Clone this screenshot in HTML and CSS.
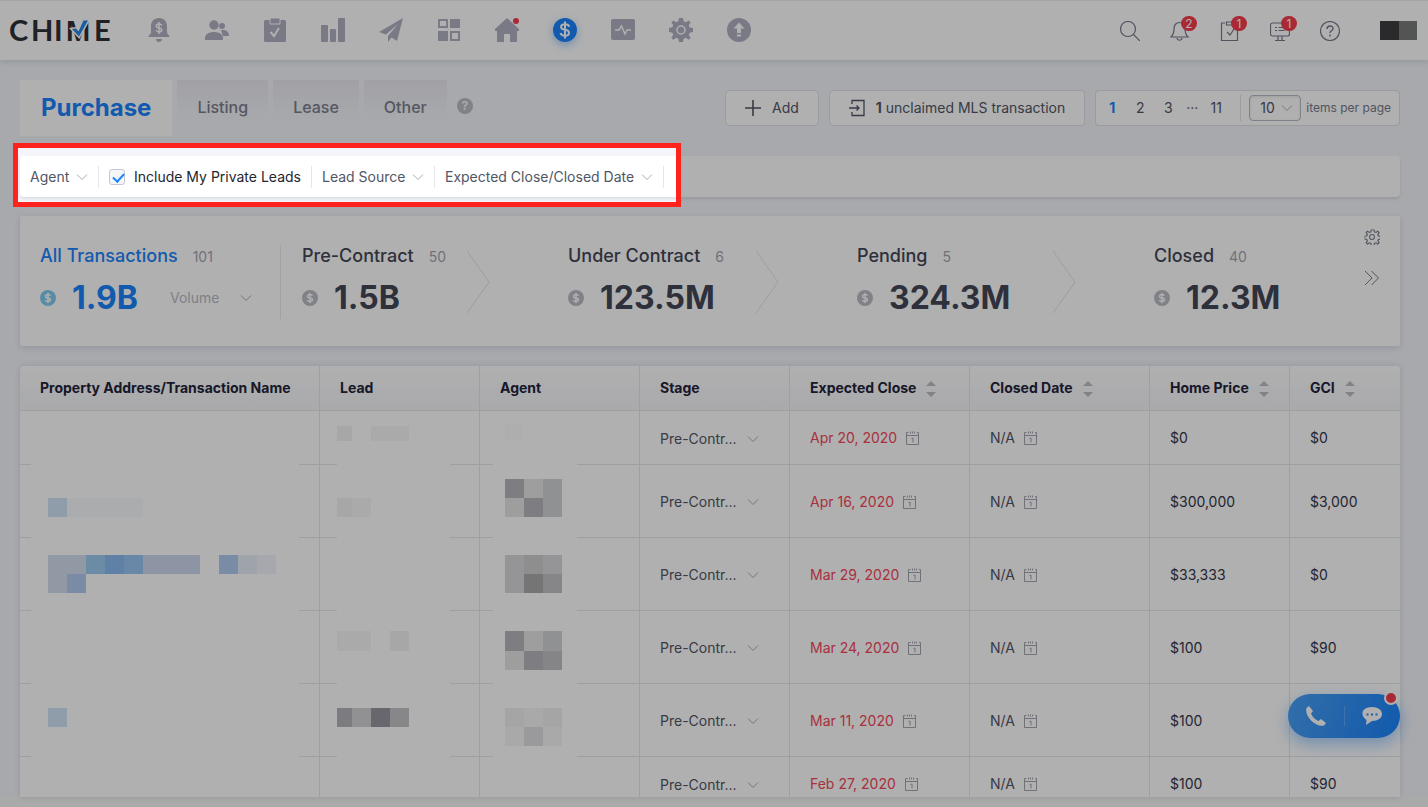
FILE: index.html
```html
<!DOCTYPE html>
<html lang="en">
<head>
<meta charset="utf-8">
<title>Chime – Transactions</title>
<meta name="viewport" content="width=device-width, initial-scale=1">
<link rel="stylesheet" href="styles.css">
</head>
<body>
<svg class="defs" aria-hidden="true">
  <symbol id="chev" viewBox="0 0 12 8"><path d="M1 1.5l5 5 5-5" fill="none" stroke="currentColor"/></symbol>
  <symbol id="cal" viewBox="0 0 14 16"><path d="M.5 2.500v12h12v-12M.5 5.500h12M.5 2.500h2M11 2.500h1.500M4.500 1.500v2M6.500 1.500v2M8.500 1.500v2M5.500 8.500l1.500-.5v4.500" fill="none" stroke="currentColor"/></symbol>
  <symbol id="coin" viewBox="0 0 16 16"><circle cx="8" cy="8" r="8" fill="currentColor"/><path d="M10.500 5.800C10 4.800 9 4.500 8 4.500c-3.300 0-3.300 3.200 0 3.500 3.300.3 3.300 3.500 0 3.500-1.200 0-2.200-.5-2.600-1.500M8 2.800v10.400" fill="none" stroke="#fff" stroke-width="1.300"/></symbol>
  <symbol id="sort" viewBox="0 0 10 16"><path d="M5 0l5 5H0zM5 16l5-5H0z" fill="currentColor"/></symbol>
  <symbol id="gear" viewBox="0 0 24 24"><path d="M10 0h4l.7 3.300 2.200.9L19.700 2.400l2 2-1.900 2.800.9 2.200L24 10v4l-3.300.7-.9 2.200 1.900 2.800-2 2-2.800-1.900-2.200.9L14 24h-4l-.7-3.300-2.200-.9-2.800 1.900-2-2 1.900-2.800-.9-2.200L0 14v-4l3.300-.7.9-2.200L2.300 4.400l2-2 2.800 1.800 2.200-.9z"/></symbol>
</svg>

<header class="top">
  <a class="logo" href="#" aria-label="Chime">
    <svg width="102" height="40" viewBox="0 -8 102 40">
      <g class="logo-text"><text x="-1" y="22">C</text><text x="21" y="22">H</text><text x="44" y="22">I</text><text class="logo-m" x="56" y="22">M</text><text x="84" y="22">E</text></g>
      <path d="M62 10l4-.500 2.500 3L73.500 1.500H78L69 17.500z" fill="#2389e8" stroke="#fff" stroke-width="3" paint-order="stroke"/>
    </svg>
  </a>
  <nav class="nav">
    <a href="#" aria-label="Alerts"><svg viewBox="0 0 24 24"><path d="M12 0c5 0 8 3.600 8 8v7l3 4H1l3-4V8c0-4.400 3-8 8-8zM9 21h6c0 4-6 4-6 0z" fill="currentColor"/><path d="M14.800 7.300C14 6 13 5.900 12 5.900c-3.600 0-3.600 3.600 0 4 3.600.4 3.600 4.100 0 4.100-1.400 0-2.500-.6-3-1.700M12 4v12" fill="none" stroke="#fff" stroke-width="1.500"/></svg></a>
    <a href="#" aria-label="People"><svg viewBox="0 0 24 24"><circle cx="17" cy="8" r="3" fill="currentColor"/><path d="M16 12.500c4-1.500 8 1 8 5.500h-6z" fill="currentColor"/><circle cx="9" cy="7" r="4.700" fill="currentColor"/><path d="M0 22v-2c0-8 18-8 18 0v2z" fill="currentColor"/></svg></a>
    <a href="#" aria-label="Tasks"><svg viewBox="0 0 24 24"><rect x="1" y="2" width="22" height="22" rx="1.500" fill="currentColor"/><path d="M7 0h10v6H7z" fill="currentColor" stroke="#fff"/><path d="M7.500 14l3.500 4 5-8" fill="none" stroke="#fff" stroke-width="2"/></svg></a>
    <a href="#" aria-label="Reports"><svg viewBox="0 0 24 24" fill="currentColor"><rect y="7" width="7" height="17" rx="1"/><rect x="9" y="11" width="6" height="13" rx="1"/><rect x="17" width="7" height="24" rx="1"/></svg></a>
    <a href="#" aria-label="Campaigns"><svg viewBox="0 0 24 24" fill="currentColor"><path d="M24 0L0 14l7 2.500L19 6 9 18v6l3.500-4.500L18 23zM7 18v6z"/></svg></a>
    <a href="#" aria-label="Apps"><svg viewBox="0 0 24 24" fill="currentColor"><path d="M1 1h10v9H1zm2 2v5h6V3zM13 1h10v9H13zM1 13h10v10H1zM13 13h10v10H13zm2 2v6h6v-6z" fill-rule="evenodd"/></svg></a>
    <a href="#" aria-label="Listings"><svg viewBox="0 0 24 24"><path d="M12 0L0 11v2h2v11h7v-8h6v8h7V13h2v-2z" fill="currentColor"/><circle cx="21" cy="3" r="3" fill="#f53d50"/></svg></a>
    <a href="#" class="on" aria-label="Transactions" aria-current="page"><svg viewBox="0 0 24 24"><circle cx="12" cy="12" r="12" fill="currentColor"/><path d="M16.300 8.800C15.700 7 14 6.300 12 6.300c-5.300 0-5.300 5 0 5.500 5.300.5 5.300 5.900 0 5.900-2.200 0-4-.9-4.500-2.700M12 3.500v17" fill="none" stroke="#fff" stroke-width="2"/></svg></a>
    <a href="#" aria-label="Activity"><svg viewBox="0 0 24 24"><rect y="1" width="24" height="21" rx="2" fill="currentColor"/><path d="M4 12h4l2.500-4 3.500 8 2-4h4" fill="none" stroke="#fff" stroke-width="1.500"/></svg></a>
    <a href="#" aria-label="Settings"><svg viewBox="0 0 24 24"><use href="#gear" fill="currentColor"/><circle cx="12" cy="12" r="4" fill="none" stroke="#fff" stroke-width="1.500"/></svg></a>
    <a href="#" aria-label="Upgrade"><svg viewBox="0 0 24 24"><circle cx="12" cy="12" r="12" fill="currentColor"/><path d="M12 4.500l5.500 6H14v4.500h-4v-4.500H6.500zM10 16.500h4v2h-4z" fill="#fff"/></svg></a>
  </nav>
  <div class="tools">
    <button aria-label="Search"><svg viewBox="0 0 20 20"><circle cx="8" cy="8" r="7.500"/><path d="M13.500 13.500l6.500 6.500"/></svg></button>
    <button aria-label="Notifications"><svg viewBox="0 0 20 20"><path d="M1 16c3-3 3-5 3-8 0-4 2-6.500 5.500-6.500S15 4 15 8c0 3 0 5 3 8zM7 17c.5 3 4.500 3 5 0"/></svg><span class="badge">2</span></button>
    <button aria-label="Tasks due"><svg viewBox="0 0 20 20"><path d="M5 2H1.500v17.500h16V2H14M6.500 1h6v3h-6zM7 11l3 3 4-6"/></svg><span class="badge">1</span></button>
    <button aria-label="Messages"><svg viewBox="0 0 20 20"><rect x=".5" y="2" width="19" height="13" rx="2"/><path d="M8 15v4M12 15v4M5 19.500h10M5 6.500h2M8.500 6.500h6M5 9.500h2M8.500 9.500h6"/></svg><span class="badge">1</span></button>
    <button aria-label="Help"><svg viewBox="0 0 20 20"><circle cx="10" cy="10" r="9.500"/><path d="M7 8c0-4 6-4 6-.500 0 2-3 2-3 4.500M10 13.500v2" stroke-width="1.400"/></svg></button>
    <svg class="avatar" width="37" height="19" viewBox="0 0 37 19"><path d="M0 0h19v19H0z" fill="#3d3e40"/><path d="M19 0h18v19H19z" fill="#797b7a"/></svg>
  </div>
</header>

<main class="page">
  <div class="bar">
    <nav class="tabs">
      <a class="tab tab-on" href="#">Purchase</a>
      <a class="tab" href="#">Listing</a>
      <a class="tab" href="#">Lease</a>
      <a class="tab" href="#">Other</a>
      <button class="hint" aria-label="About transaction types">?</button>
    </nav>
    <div class="actions">
      <button class="btn"><svg width="16" height="16" viewBox="0 0 16 16"><path d="M8 0v16M0 8h16" stroke="currentColor" stroke-width="1.600"/></svg>Add</button>
      <button class="btn"><svg width="16" height="18" viewBox="0 0 16 18"><path d="M3 5V1.500h12v15H3V13M0 9h10M7.500 6.500L10 9l-2.500 2.500" fill="none" stroke="currentColor" stroke-width="1.300"/></svg><span><b>1</b> unclaimed MLS transaction</span></button>
      <div class="pager">
        <a class="pg pg-on" href="#">1</a><a class="pg" href="#">2</a><a class="pg" href="#">3</a><span class="dots">···</span><a class="pg" href="#">11</a>
        <label class="size"><span class="drop size-drop"><select><option>10</option></select><svg class="chev"><use href="#chev"/></svg></span>items per page</label>
      </div>
    </div>
  </div>

  <section class="filters">
    <div class="filter-set">
      <label class="drop filter"><select aria-label="Agent"><option>Agent</option></select><svg class="chev"><use href="#chev"/></svg></label>
      <label class="filter check"><input type="checkbox" checked><span>Include My Private Leads</span></label>
      <label class="drop filter"><select aria-label="Lead Source"><option>Lead Source</option></select><svg class="chev"><use href="#chev"/></svg></label>
      <label class="drop filter"><select aria-label="Expected Close/Closed Date"><option>Expected Close/Closed Date</option></select><svg class="chev"><use href="#chev"/></svg></label>
      <div class="spotlight"></div>
    </div>
  </section>

  <section class="stats">
    <div class="stat stat-all">
      <div class="stat-head"><h2>All Transactions</h2><span>101</span></div>
      <div class="stat-sum"><svg class="coin"><use href="#coin"/></svg><strong>1.9B</strong><label class="drop volume"><select aria-label="Measure"><option>Volume</option></select><svg class="chev"><use href="#chev"/></svg></label></div>
    </div>
    <div class="stat stat-first">
      <div class="stat-head"><h2>Pre-Contract</h2><span>50</span></div>
      <div class="stat-sum"><svg class="coin"><use href="#coin"/></svg><strong>1.5B</strong></div>
      <svg class="arrow" viewBox="0 0 24 64"><path d="M1 1l22 31L1 63"/></svg>
    </div>
    <div class="stat">
      <div class="stat-head"><h2>Under Contract</h2><span>6</span></div>
      <div class="stat-sum"><svg class="coin"><use href="#coin"/></svg><strong>123.5M</strong></div>
      <svg class="arrow" viewBox="0 0 24 64"><path d="M1 1l22 31L1 63"/></svg>
    </div>
    <div class="stat">
      <div class="stat-head"><h2>Pending</h2><span>5</span></div>
      <div class="stat-sum"><svg class="coin"><use href="#coin"/></svg><strong>324.3M</strong></div>
      <svg class="arrow" viewBox="0 0 24 64"><path d="M1 1l22 31L1 63"/></svg>
    </div>
    <div class="stat">
      <div class="stat-head"><h2>Closed</h2><span>40</span></div>
      <div class="stat-sum"><svg class="coin"><use href="#coin"/></svg><strong>12.3M</strong></div>
      <div class="stat-tools">
        <button aria-label="Pipeline settings"><svg width="16" height="16" viewBox="-1 -1 26 26" fill="none" stroke="currentColor" stroke-width="1.700"><use href="#gear"/><circle cx="12" cy="12" r="4"/></svg></button>
        <button aria-label="More stages"><svg width="16" height="16" viewBox="0 0 16 16" fill="none" stroke="currentColor"><path d="M1 1l7 7-7 7M7.500 1l7 7-7 7"/></svg></button>
      </div>
    </div>
  </section>

  <section class="grid">
    <table>
      <colgroup><col class="c-name"><col class="c-mid"><col class="c-mid"><col class="c-stage"><col class="c-date"><col class="c-date"><col class="c-price"><col></colgroup>
      <thead><tr><th>Property Address/Transaction Name</th><th>Lead</th><th>Agent</th><th>Stage</th><th>Expected Close<svg class="sort"><use href="#sort"/></svg></th><th>Closed Date<svg class="sort"><use href="#sort"/></svg></th><th>Home Price<svg class="sort"><use href="#sort"/></svg></th><th>GCI<svg class="sort"><use href="#sort"/></svg></th></tr></thead>
      <tbody>
        <tr class="short"><td></td><td></td><td></td><td><label class="drop"><select aria-label="Stage"><option>Pre-Contr...</option></select><svg class="chev"><use href="#chev"/></svg></label></td><td class="late">Apr 20, 2020<svg class="cal"><use href="#cal"/></svg></td><td class="na">N/A<svg class="cal"><use href="#cal"/></svg></td><td>$0</td><td>$0</td></tr>
        <tr><td></td><td></td><td></td><td><label class="drop"><select aria-label="Stage"><option>Pre-Contr...</option></select><svg class="chev"><use href="#chev"/></svg></label></td><td class="late">Apr 16, 2020<svg class="cal"><use href="#cal"/></svg></td><td class="na">N/A<svg class="cal"><use href="#cal"/></svg></td><td>$300,000</td><td>$3,000</td></tr>
        <tr><td></td><td></td><td></td><td><label class="drop"><select aria-label="Stage"><option>Pre-Contr...</option></select><svg class="chev"><use href="#chev"/></svg></label></td><td class="late">Mar 29, 2020<svg class="cal"><use href="#cal"/></svg></td><td class="na">N/A<svg class="cal"><use href="#cal"/></svg></td><td>$33,333</td><td>$0</td></tr>
        <tr><td></td><td></td><td></td><td><label class="drop"><select aria-label="Stage"><option>Pre-Contr...</option></select><svg class="chev"><use href="#chev"/></svg></label></td><td class="late">Mar 24, 2020<svg class="cal"><use href="#cal"/></svg></td><td class="na">N/A<svg class="cal"><use href="#cal"/></svg></td><td>$100</td><td>$90</td></tr>
        <tr><td></td><td></td><td></td><td><label class="drop"><select aria-label="Stage"><option>Pre-Contr...</option></select><svg class="chev"><use href="#chev"/></svg></label></td><td class="late">Mar 11, 2020<svg class="cal"><use href="#cal"/></svg></td><td class="na">N/A<svg class="cal"><use href="#cal"/></svg></td><td>$100</td><td></td></tr>
        <tr class="short"><td></td><td></td><td></td><td><label class="drop"><select aria-label="Stage"><option>Pre-Contr...</option></select><svg class="chev"><use href="#chev"/></svg></label></td><td class="late">Feb 27, 2020<svg class="cal"><use href="#cal"/></svg></td><td class="na">N/A<svg class="cal"><use href="#cal"/></svg></td><td>$100</td><td>$90</td></tr>
      </tbody>
    </table>
    <svg class="redact" width="620" height="440" viewBox="20 366 620 440" shape-rendering="crispEdges" aria-hidden="true">
      <g fill="#fff"><path d="M31 411h268v395H31zM337 411h113v395H337zM493 411h84v395h-84z"/></g>
      <g fill="#f7f7f8"><path d="M337 426h15v15h-15zM371 426h38v15h-38zM337 498h34v19h-34zM337 631h34v20h-34zM390 631h19v20h-19z"/></g>
      <path d="M337 426h15v15h-15zM337 498h15v19h-15zM390 631h19v20h-19z" fill="#f2f2f3"/>
      <path d="M505 423h18v18h-18z" fill="#fcfcfd"/>
      <path d="M48 498h19v19H48zM48 708h19v19H48z" fill="#d0e2f6"/>
      <path d="M67 498h76v19H67z" fill="#f8f9fc"/>
      <path d="M48 555h38v19H48zM48 574h19v19H48z" fill="#d3dfee"/>
      <path d="M86 555h19v19H86z" fill="#9dcaf0"/>
      <path d="M105 555h19v19h-19z" fill="#88bbef"/>
      <path d="M124 555h19v19h-19z" fill="#99c4f2"/>
      <path d="M143 555h57v19h-57z" fill="#ccd7ee"/>
      <path d="M67 574h19v19H67zM219 555h19v19h-19z" fill="#b1cbf0"/>
      <path d="M238 555h19v19h-19z" fill="#e6eef8"/>
      <path d="M257 555h19v19h-19z" fill="#f1f4fb"/>
      <path d="M505 479h19v19h-19zM505 631h19v20h-19zM524 498h19v19h-19zM524 651h19v19h-19z" fill="#b6b6bd"/>
      <path d="M524 479h19v19h-19zM505 498h19v19h-19zM524 631h19v20h-19zM505 651h19v19h-19z" fill="#e5e5e6"/>
      <path d="M543 479h19v19h-19zM543 498h19v19h-19zM543 631h19v20h-19z" fill="#d1d2d5"/>
      <path d="M543 651h19v19h-19z" fill="#c1c1c6"/>
      <path d="M505 555h57v38h-57z" fill="#d8d8db"/>
      <path d="M524 555h19v19h-19z" fill="#cececf"/>
      <path d="M524 574h19v19h-19z" fill="#aaaaac"/>
      <path d="M543 574h19v19h-19z" fill="#c3c3c5"/>
      <path d="M505 708h57v38h-57z" fill="#f5f5f6"/>
      <path d="M505 708h19v19h-19zM543 708h19v19h-19z" fill="#efeff0"/>
      <path d="M524 727h19v19h-19z" fill="#e0e0e3"/>
      <path d="M337 708h15v19h-15z" fill="#b4b4ba"/>
      <path d="M352 708h19v19h-19z" fill="#d3d3d7"/>
      <path d="M371 708h19v19h-19z" fill="#96969e"/>
      <path d="M390 708h19v19h-19z" fill="#c4c4c9"/>
    </svg>
  </section>
</main>

<div class="fab">
  <button aria-label="Call"><svg width="20" height="20" viewBox="0 0 20 20"><path d="M3 0l4 5-2 2.500c1.500 3.500 4 6 7.500 7.500l2.500-2 5 4-2 2.500C10 22-2 10 .5 2z" fill="#fff"/></svg></button>
  <button aria-label="Chat"><svg width="20" height="18" viewBox="0 0 20 18"><path d="M10 0c6 0 10 3 10 7s-4 7-10 7l-6 4 .5-5C-2 9-1 0 10 0z" fill="#fff"/><path d="M4.500 6.500h2v2h-2zM9 6.500h2v2H9zM13.500 6.500h2v2h-2z" fill="#2b88f5"/></svg></button>
  <span class="fab-dot"></span>
</div>
</body>
</html>
```
FILE: styles.css
```css
* { box-sizing: border-box; }
body {
  margin: 0;
  height: 100vh;
  display: flex;
  flex-direction: column;
  overflow: hidden;
  background: #f3f5fa;
  color: #515666;
  font: 14px/20px Inter, "Noto Sans", sans-serif;
}
a { color: inherit; text-decoration: none; }
button, select, input { font: inherit; color: inherit; margin: 0; }
button { padding: 0; border: 0; background: none; display: flex; align-items: center; justify-content: center; }
svg { display: block; flex: none; }
.defs { position: absolute; width: 0; height: 0; }

.top {
  height: 60px;
  flex: none;
  display: flex;
  align-items: center;
  padding: 0 11px 0 10px;
  background: #fff;
  border-top: 1px solid #f0f0f2;
  box-shadow: 0 2px 6px rgba(40, 70, 100, .15);
}
.logo svg { overflow: visible; }
.logo-text { fill: #2f3037; font: 700 29px Lato, sans-serif; }
.logo-m { font-family: "Liberation Sans", sans-serif; }
.nav { display: flex; gap: 34px; margin-left: 35px; padding-bottom: 2px; color: #b0b1c3; }
.nav svg { width: 24px; height: 24px; }
.nav .on { color: #1983fb; border-radius: 50%; box-shadow: 0 3px 8px rgba(25, 131, 251, .4); }
.tools { display: flex; align-items: center; gap: 30px; margin-left: auto; color: #777a8b; }
.tools button { position: relative; }
.tools button svg { width: 20px; height: 20px; fill: none; stroke: currentColor; stroke-width: 1.2; }
.tools .avatar { margin-left: 10px; }
.badge {
  position: absolute;
  left: 11px;
  top: -5px;
  min-width: 16px;
  height: 15px;
  border-radius: 8px;
  background: #f53d4c;
  color: #fff;
  font-size: 12px;
  line-height: 15px;
  text-align: center;
}

.page { flex: 1; min-height: 0; display: flex; flex-direction: column; padding: 20px 28px 0 20px; border-bottom: 10px solid #f6f6f6; }
.bar { display: flex; justify-content: space-between; height: 56px; margin-bottom: 20px; }
.tabs { display: flex; align-items: flex-start; gap: 5px; font-size: 16px; font-weight: 500; color: #7c7e8d; }
.tab { height: 56px; line-height: 55px; padding: 0 20px; background: linear-gradient(#e9e9f0, #f3f5fa 70%); }
.tab-on { padding: 0 21px; background: #fff; color: #1983fb; font-size: 24px; font-weight: 700; }
.hint { width: 16px; height: 16px; margin: 18px 0 0 5px; border-radius: 50%; background: #bbbcc6; color: #f3f5fa; font-size: 12px; font-weight: 700; line-height: 16px; }

.actions { display: flex; gap: 10px; padding: 10px 0; }
.btn { gap: 11px; padding: 0 19px; background: #fff; border: 1px solid #dfe1e8; border-radius: 4px; }
.btn b { font-weight: 700; }
.pager { display: flex; align-items: center; background: #fff; border: 1px solid #dfe1e8; border-radius: 4px; padding: 0 8px 0 2px; }
.pg { min-width: 28px; padding: 0 6px; text-align: center; }
.pg-on { color: #1983fb; font-weight: 700; }
.dots { width: 20px; text-align: center; }
.size { display: flex; align-items: center; gap: 5px; margin-left: 10px; padding-left: 8px; border-left: 1px solid #e3e4ea; font-size: 12px; color: #777a8b; }
.drop { display: inline-flex; align-items: center; gap: 6px; vertical-align: middle; }
.drop select { appearance: none; border: 0; padding: 0; background: none; outline: 0; }
.drop option { padding: 0; }
.chev { width: 12px; height: 8px; color: #a9abb8; }
.size-drop { height: 26px; padding: 0 7px 0 10px; border: 1px solid #b9bcc8; border-radius: 4px; font-size: 14px; color: #515666; box-shadow: inset 0 1px 3px rgba(80, 86, 102, .15); }

.filters { flex: none; height: 41px; display: flex; margin-bottom: 19px; background: #fff; border-radius: 4px; box-shadow: 0 2px 3px rgba(50, 60, 90, .12); }
.filter-set { position: relative; display: flex; align-items: center; padding-right: 7px; }
.filter { height: 22px; padding: 0 10px; border-right: 1px solid #e6e7ed; }
.check { display: flex; align-items: center; gap: 9px; color: #24252e; }
.check input { appearance: none; width: 16px; height: 16px; border: 1px solid #c4c7d3; border-radius: 3px; background: #f4f6fa; position: relative; }
.check input:checked::after { content: ""; position: absolute; left: 3px; top: 3px; width: 9px; height: 5px; border: solid #1983fb; border-width: 0 0 2px 2px; transform: rotate(-48deg); }
.spotlight { position: absolute; inset: -13px -10px -10px -7px; z-index: 20; border: 5px solid #ff231d; box-shadow: 0 0 0 3000px rgba(0, 0, 0, .31); pointer-events: none; }

.stats { flex: none; display: grid; grid-template-columns: 261fr 209fr 289fr 297fr 324fr; height: 130px; margin-bottom: 20px; background: #fff; border-radius: 2px; box-shadow: 0 2px 6px rgba(40, 60, 90, .15); }
.stat { position: relative; padding: 28px 0 0 78px; color: #434756; }
.stat-all { padding-left: 20px; color: #1983fb; background: linear-gradient(#e9eaef, #e9eaef) right 29px / 1px 74px no-repeat; }
.stat-first { padding-left: 21px; }
.stat-head { display: flex; align-items: baseline; gap: 15px; height: 24px; }
.stat-head h2 { margin: 0; font-size: 18px; line-height: 24px; font-weight: 500; white-space: nowrap; }
.stat-head span { color: #a3a4b0; }
.stat-sum { display: flex; align-items: center; gap: 16px; margin-top: 10px; height: 40px; }
.stat-sum strong { font-size: 32px; line-height: 40px; font-weight: 700; }
.coin { width: 16px; height: 16px; color: #bbbcc6; }
.stat-all .coin { color: #80cbf0; }
.volume { margin-left: 16px; gap: 20px; color: #b9bbc7; }
.arrow { position: absolute; right: 0; top: 34px; width: 24px; height: 64px; fill: none; stroke: #e3e4ea; }
.stat-tools { position: absolute; right: 20px; top: 13px; display: flex; flex-direction: column; gap: 25px; color: #777a8b; }

.grid { position: relative; flex: 1; min-height: 0; overflow: hidden; border-radius: 4px 4px 0 0; background: #fff; box-shadow: 0 0 6px rgba(40, 60, 90, .15); }
table { width: 100%; table-layout: fixed; border-collapse: separate; border-spacing: 0; }
.c-name { width: 300px; }
.c-mid { width: 160px; }
.c-stage { width: 150px; }
.c-date { width: 180px; }
.c-price { width: 140px; }
th, td { padding: 0 0 0 20px; text-align: left; border: solid #e5e6ec; border-width: 0 1px 1px 0; white-space: nowrap; }
th:last-child, td:last-child { border-right: 0; }
th { height: 45px; background: linear-gradient(#fff, #f5f6fa); color: #23243a; font-weight: 700; }
td { height: 73px; padding-top: 1px; color: #33364a; }
.short td { height: 54px; }
td .drop { gap: 10px; color: #515666; }
td.late { color: #f5465a; }
td.na { color: #515666; }
.sort { display: inline-block; width: 10px; height: 16px; margin-left: 10px; color: #bbbcc2; vertical-align: middle; }
.cal { display: inline-block; width: 14px; height: 16px; margin-left: 9px; color: #a3a4b0; vertical-align: -3px; }
.redact { position: absolute; left: 0; top: 0; }

.fab { position: absolute; right: 28px; bottom: 69px; width: 112px; height: 44px; display: flex; border-radius: 22px; background: linear-gradient(110deg, #4aa0f5, #1983fb); box-shadow: 0 6px 16px rgba(25, 131, 251, .4); }
.fab button { flex: 1; }
.fab button + button { background: linear-gradient(#5aa5f8, #5aa5f8) left center / 1px 20px no-repeat; }
.fab-dot { position: absolute; right: 2px; top: -3px; width: 14px; height: 14px; border: 2px solid #fff; border-radius: 50%; background: #f53d4c; }
```
